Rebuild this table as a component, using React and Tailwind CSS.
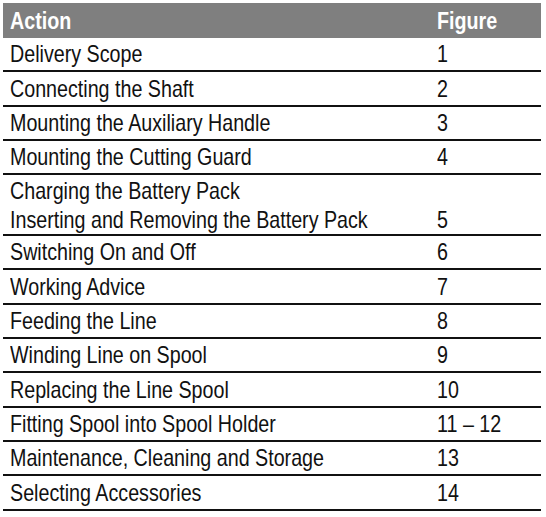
import React from 'react';

const rows = [
  { action: ['Delivery Scope'], figure: '1' },
  { action: ['Connecting the Shaft'], figure: '2' },
  { action: ['Mounting the Auxiliary Handle'], figure: '3' },
  { action: ['Mounting the Cutting Guard'], figure: '4' },
  { action: ['Charging the Battery Pack', 'Inserting and Removing the Battery Pack'], figure: '5' },
  { action: ['Switching On and Off'], figure: '6' },
  { action: ['Working Advice'], figure: '7' },
  { action: ['Feeding the Line'], figure: '8' },
  { action: ['Winding Line on Spool'], figure: '9' },
  { action: ['Replacing the Line Spool'], figure: '10' },
  { action: ['Fitting Spool into Spool Holder'], figure: '11 – 12' },
  { action: ['Maintenance, Cleaning and Storage'], figure: '13' },
  { action: ['Selecting Accessories'], figure: '14' },
];

// narrow text: Arial metrics squeezed to look like the condensed manual font
function Narrow({ children }) {
  return <span className="inline-block origin-left scale-x-[0.82] whitespace-nowrap">{children}</span>;
}

export default function App() {
  return (
    <div className="w-[546px] h-[517px] bg-white pt-[3px] pl-[3px] overflow-hidden">
      <div className="w-[538px] text-[24px] text-[#111] font-['Liberation_Sans',Arial,sans-serif]">
        {/* header */}
        <div className="flex h-[35px] leading-[35px] bg-[#7f7f7f] text-white font-bold">
          <div className="flex-1 min-w-0 pl-[7px]"><Narrow>Action</Narrow></div>
          <div className="w-[104px] shrink-0"><Narrow>Figure</Narrow></div>
        </div>

        {rows.map((r) => (
          <div
            key={r.figure}
            className={
              r.action.length > 1
                ? 'flex items-end h-[61px] pt-px border-b-2 border-[#111] leading-[29px]'
                : 'flex items-end h-[34.3px] border-b-2 border-[#111] leading-[32px]'
            }
          >
            <div className="flex-1 min-w-0 pl-[7px]">
              {r.action.map((a) => (
                <div key={a}><Narrow>{a}</Narrow></div>
              ))}
            </div>
            <div className="w-[104px] shrink-0"><Narrow>{r.figure}</Narrow></div>
          </div>
        ))}
      </div>
    </div>
  );
}
